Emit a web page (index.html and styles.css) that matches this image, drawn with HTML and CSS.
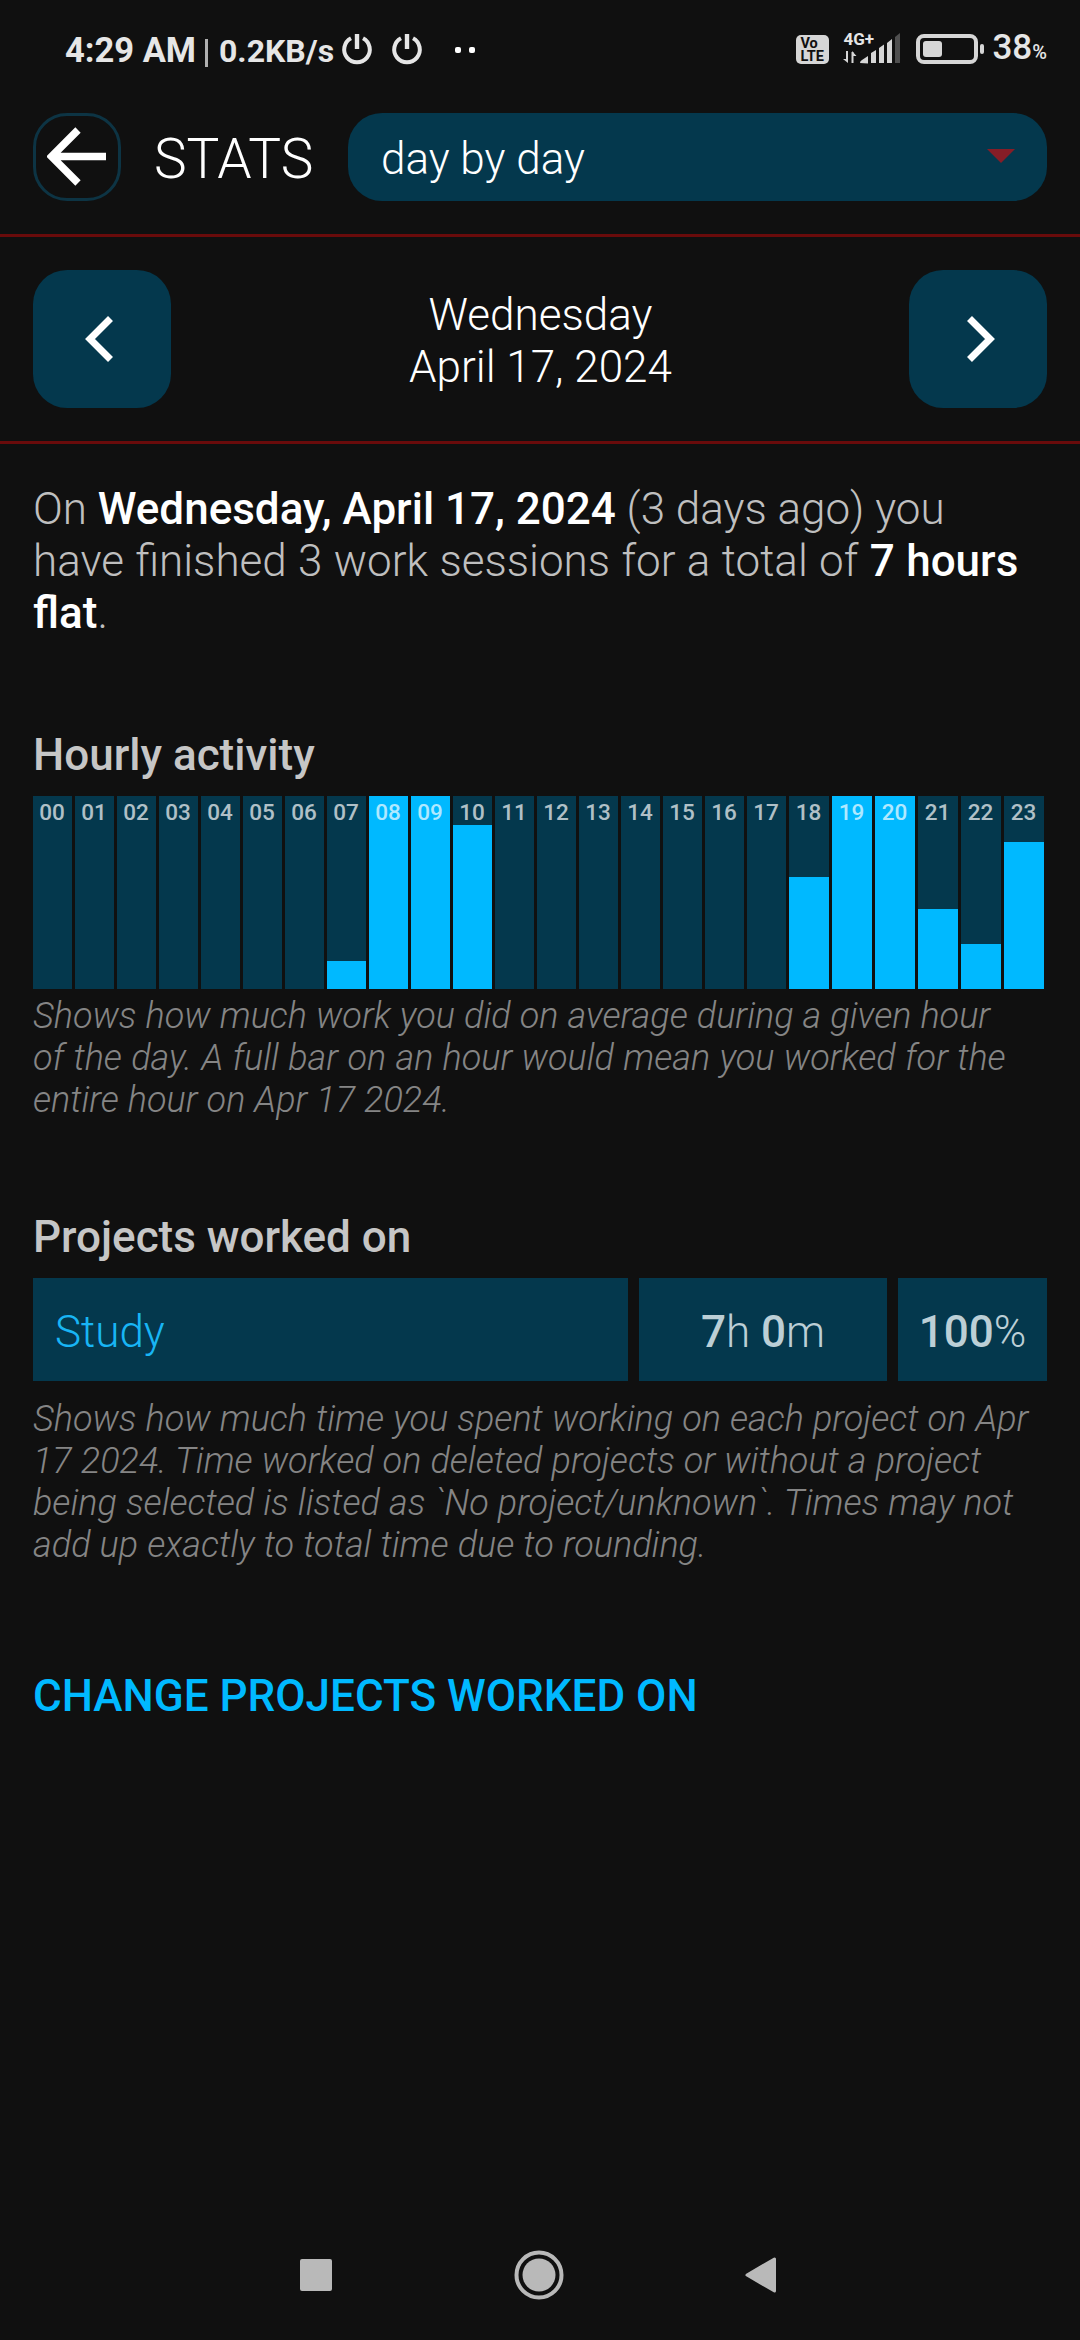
FILE: index.html
```html
<!DOCTYPE html>
<html lang="en">
<head>
    <meta charset="UTF-8">
    <meta name="viewport" content="width=device-width, initial-scale=1.0">
    <title>Stats</title>
    <link rel="stylesheet" href="styles.css">
</head>
<body>
    <div class="status-bar">
        <span class="clock">4:29 AM</span>
        <span class="divider"></span>
        <span class="speed">0.2KB/s</span>
        <svg class="power" width="32" height="32" viewBox="0 0 32 32">
            <path d="M10 5.2A12.8 12.8 0 1 0 22 5.2" fill="none" stroke="#e6e6e6" stroke-width="4"/>
            <path d="M16 1v15" stroke="#e6e6e6" stroke-width="4.4"/>
        </svg>
        <svg class="power second" width="32" height="32" viewBox="0 0 32 32">
            <path d="M10 5.2A12.8 12.8 0 1 0 22 5.2" fill="none" stroke="#e6e6e6" stroke-width="4"/>
            <path d="M16 1v15" stroke="#e6e6e6" stroke-width="4.4"/>
        </svg>
        <span class="dot"></span>
        <span class="dot"></span>
        <div class="volte"><span>Vo</span><span>LTE</span></div>
        <div class="signal">
            <span class="network">4G+</span>
            <svg width="57" height="32" viewBox="0 0 57 32">
                <path d="M4 18v10M9.5 19v11" stroke="#d6d6d6" stroke-width="2"/>
                <path d="M5 30L0 26h5zM9 18l4.5 5H9z" fill="#d6d6d6"/>
                <path d="M17 30q0-2 2-3l6-4v7.500zM28 20l5-3v13h-5zM36 15l5-3.500V30h-5zM44 10l5-4v24h-5z" fill="#d6d6d6"/>
                <path d="M52 4l5-4v30h-5z" fill="#4f4f4f"/>
            </svg>
        </div>
        <svg class="battery" width="68" height="32" viewBox="0 0 68 32">
            <rect x="2" y="3" width="58" height="26" rx="6" fill="none" stroke="#d6d6d6" stroke-width="4"/>
            <rect x="7" y="8" width="19" height="16" rx="3" fill="#d6d6d6"/>
            <rect x="64" y="11" width="4" height="10" rx="2" fill="#d6d6d6"/>
        </svg>
        <span class="percent">38<small>%</small></span>
    </div>

    <div class="header">
        <button class="back-button">
            <svg width="60" height="60" viewBox="0 0 60 60">
                <path d="M31 3L4.500 29.500L31 56M4 29.500H59" fill="none" stroke="#fff" stroke-width="7.500"/>
            </svg>
        </button>
        <div class="title">STATS</div>
        <div class="select">
            <span>day by day</span>
            <svg width="28" height="14" viewBox="0 0 28 14"><path d="M0 0h28L14 14z" fill="#861d27"/></svg>
        </div>
    </div>

    <div class="date-nav">
        <button class="nav-button prev">
            <svg width="28" height="46" viewBox="0 0 28 46"><path d="M25.500 2.500L5 23l20.500 20.500" fill="none" stroke="#fff" stroke-width="7"/></svg>
        </button>
        <div class="date">Wednesday<br>April 17, 2024</div>
        <button class="nav-button next">
            <svg width="28" height="46" viewBox="0 0 28 46"><path d="M2.500 2.500L23 23L2.500 43.500" fill="none" stroke="#fff" stroke-width="7"/></svg>
        </button>
    </div>

    <div class="content">
        <p class="summary">On <b>Wednesday, April 17, 2024</b> (3 days ago) you<br><span class="wide">have finished 3 work sessions for a total of <b>7 hours</b></span><br><b>flat</b>.</p>

        <h2>Hourly activity</h2>
        <div class="chart" id="chart"></div>
        <p class="note">Shows how much work you did on average during a given hour<br><span class="wide">of the day. A full bar on an hour would mean you worked for the</span><br>entire hour on Apr 17 2024.</p>

        <h2>Projects worked on</h2>
        <div class="project">
            <div class="project-name">Study</div>
            <div class="project-time"><b>7</b>h <b>0</b>m</div>
            <div class="project-share"><b>100</b>%</div>
        </div>
        <p class="note">Shows how much time you spent working on each project on Apr<br>17 2024. Time worked on deleted projects or without a project<br>being selected is listed as `No project/unknown`. Times may not<br>add up exactly to total time due to rounding.</p>

        <a class="change-link">CHANGE PROJECTS WORKED ON</a>
    </div>

    <div class="system-nav">
        <svg width="32" height="32" viewBox="0 0 32 32"><rect width="32" height="32" rx="2" fill="#b9b9b9"/></svg>
        <svg width="50" height="50" viewBox="0 0 50 50">
            <circle cx="25" cy="25" r="22.500" fill="none" stroke="#b9b9b9" stroke-width="4"/>
            <circle cx="25" cy="25" r="16.500" fill="#b9b9b9"/>
        </svg>
        <svg width="32" height="38" viewBox="0 0 32 38"><path d="M2 19L29.500 3v32z" fill="#b9b9b9" stroke="#b9b9b9" stroke-width="3" stroke-linejoin="round"/></svg>
    </div>

    <script>
        // share of each hour worked, in percent
        const hours = [0, 0, 0, 0, 0, 0, 0, 14.5, 100, 100, 85, 0, 0, 0, 0, 0, 0, 0, 58, 100, 100, 41.5, 23.3, 76.2];
        const chart = document.getElementById("chart");

        hours.forEach((value, hour) => {
            const bar = document.createElement("div");
            bar.className = "hour";
            bar.innerHTML = `<div class="fill" style="height: ${value}%"></div><span>${String(hour).padStart(2, "0")}</span>`;
            chart.appendChild(bar);
        });
    </script>
</body>
</html>
```
FILE: styles.css
```css
* {
    box-sizing: border-box;
}
body {
    margin: 0;
    width: 1080px;
    height: 2340px;
    display: flex;
    flex-direction: column;
    overflow: hidden;
    background-color: #101010;
    color: #bfbfbf;
    font-family: Roboto, sans-serif;
    font-size: 44px;
    font-weight: 300;
    line-height: 52px;
}
svg {
    display: block;
    flex: none;
}
p, h2 {
    margin: 0;
}
b, h2 {
    font-weight: 500;
}
.status-bar {
    display: flex;
    align-items: center;
    height: 98px;
    padding: 0 33px 0 65px;
    color: #e6e6e6;
    font-weight: 700;
    white-space: nowrap;
}
.clock {
    width: 130px;
    margin-top: 2px;
    font-size: 34.500px;
}
.divider {
    width: 3px;
    height: 28px;
    margin: 8px 0 0 10px;
    background-color: #b0b0b0;
}
.speed {
    width: 112px;
    margin: 3px 0 0 11px;
    font-size: 32px;
}
.power {
    margin-left: 10px;
}
.second {
    margin: 0 24px 0 18px;
}
.dot {
    width: 6px;
    height: 6px;
    margin: 2px 0 0 8px;
    border-radius: 2px;
    background-color: #fff;
}
.volte {
    display: flex;
    flex-direction: column;
    justify-content: center;
    width: 33px;
    height: 29px;
    margin: 1px 14px 0 auto;
    padding-left: 4px;
    border-radius: 5px;
    background-color: #d6d6d6;
    color: #101010;
    font-size: 14.500px;
    line-height: 13px;
}
.signal {
    position: relative;
}
.network {
    position: absolute;
    top: -3px;
    left: 0;
    font-size: 17px;
    line-height: 18px;
}
.battery {
    margin-left: 16px;
}
.percent {
    margin: 2px 0 0 8px;
    font-size: 35px;
    font-weight: 500;
}
.percent small {
    font-size: 20px;
}
.header {
    display: flex;
    align-items: center;
    height: 139px;
    padding: 15px 33px 33px;
    border-bottom: 3px solid #690b0b;
}
button {
    display: flex;
    align-items: center;
    justify-content: center;
    padding: 0;
    border: none;
    border-radius: 34px;
}
.back-button {
    width: 88px;
    height: 88px;
    border: 3px solid #0d3444;
    background: none;
}
.title {
    width: 227px;
    padding: 4px 0 0 33px;
    color: #fff;
    font-size: 55px;
}
.select {
    flex: 1;
    display: flex;
    align-items: center;
    justify-content: space-between;
    height: 88px;
    padding: 0 32px 0 33px;
    border-radius: 34px;
    background-color: #04384d;
    color: #fff;
}
.select span {
    padding-top: 4px;
}
.select svg {
    margin-bottom: 2px;
}
.date-nav {
    display: flex;
    align-items: center;
    justify-content: space-between;
    height: 207px;
    padding: 0 33px;
    border-bottom: 3px solid #690b0b;
}
.nav-button {
    width: 138px;
    height: 138px;
    background-color: #04384d;
}
.prev {
    padding-right: 6px;
}
.next {
    padding-left: 7px;
}
.date {
    padding: 4px 0 0 1px;
    color: #fff;
    text-align: center;
}
.content {
    flex: 1;
    padding: 39px 33px 0;
    white-space: nowrap;
}
.summary b {
    color: #fff;
}
.wide {
    word-spacing: 0.6px;
}
h2 {
    margin-top: 90px;
    color: #c6c6c6;
    font-size: 44px;
}
.chart {
    display: grid;
    grid-template-columns: repeat(18, 39px) repeat(6, 40px);
    gap: 3px;
    height: 193px;
    margin-top: 15px;
}
.hour {
    display: flex;
    align-items: flex-end;
    position: relative;
    background-color: #04384d;
}
.hour span {
    position: absolute;
    top: 0;
    left: 0;
    right: 1px;
    color: rgba(255, 255, 255, 0.7);
    font-size: 22.500px;
    font-weight: 500;
    line-height: 32px;
    text-align: center;
}
.fill {
    width: 100%;
    background-color: #00b9ff;
}
.note {
    margin-top: 6px;
    color: #858585;
    font-size: 36px;
    font-style: italic;
    line-height: 42px;
    word-spacing: 0.35px;
}
.project {
    display: grid;
    grid-template-columns: 595px 248px 149px;
    grid-template-rows: 103px;
    gap: 11px;
    margin: 15px 0 17px;
    line-height: 109px;
    color: #bccfd6;
    text-align: center;
}
.project > div {
    background-color: #04384d;
}
.project .project-name {
    padding-left: 22px;
    color: #18b5f5;
    text-align: left;
}
.change-link {
    display: block;
    margin-top: 104px;
    color: #00b9ff;
    font-weight: 500;
}
.system-nav {
    display: flex;
    align-items: center;
    justify-content: space-between;
    height: 130px;
    padding: 0 303px 0 300px;
}
```
